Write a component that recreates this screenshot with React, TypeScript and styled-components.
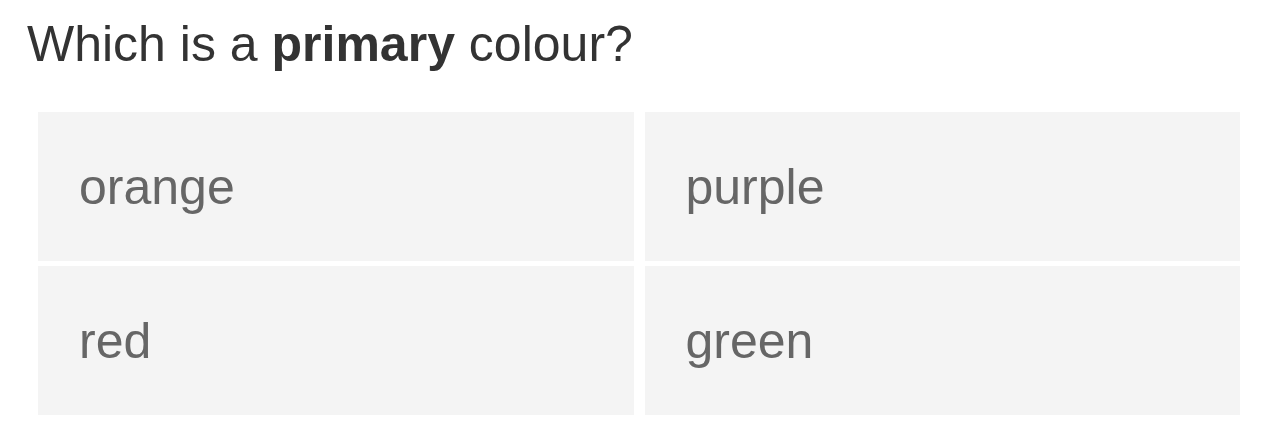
import React from "react";
import styled, { createGlobalStyle } from "styled-components";

const GlobalStyle = createGlobalStyle`
    html, body {
        margin: 0;
        padding: 0;
        background: #ffffff;
        font-family: "Liberation Sans", Arial, sans-serif;
    }
`;

const options = ["orange", "purple", "red", "green"];

const App = () => {
    return (
        <>
            <GlobalStyle />
            <Wrapper>
                <Question>
                    Which is a <strong>primary</strong> colour?
                </Question>
                <Grid>
                    {options.map((item) => (
                        <Option key={item}>{item}</Option>
                    ))}
                </Grid>
            </Wrapper>
        </>
    );
};

const Wrapper = styled.div`
    padding: 10px 40px 0 38px;
`;

const Question = styled.h2`
    margin: 0 0 33px -11px;
    font-size: 50px;
    font-weight: 400;
    line-height: 69px;
    color: #333333;

    strong {
        font-weight: 700;
    }
`;

const Grid = styled.div`
    width: 1202px;
    display: grid;
    grid-template-columns: 1fr 1fr;
    grid-auto-rows: 149px;
    column-gap: 11px;
    row-gap: 5px;
`;

const Option = styled.div`
    display: flex;
    align-items: center;
    padding-left: 41px;
    background-color: #f4f4f4;
    font-size: 50px;
    color: #666666;
`;

export default App;
